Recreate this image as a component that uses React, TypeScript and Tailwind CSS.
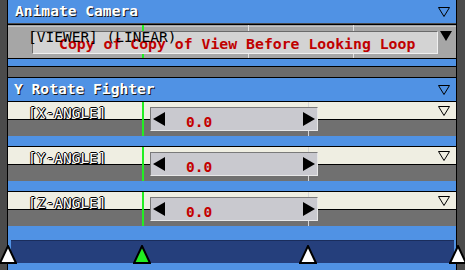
import React from "react";

const FONT = "font-['DejaVu_Sans_Mono',monospace]";

function DownOutline() {
  return (
    <svg width="12" height="10" viewBox="0 0 12 10" className="shrink-0">
      <polygon points="0.5,0.5 11.5,0.5 6,9.5" fill="none" stroke="#000" strokeWidth="1" />
    </svg>
  );
}

function Header({ title, pl }: { title: string; pl: string }) {
  return (
    <div className={`h-[23px] bg-[#5092e4] flex items-center justify-between pr-[6px] ${pl}`}>
      <span className="text-white font-bold text-[14.6px] leading-none [text-shadow:1px_1px_0_#1a1a1a]">{title}</span>
      <DownOutline />
    </div>
  );
}

function LeftArrow() {
  return (
    <svg width="12" height="14" viewBox="0 0 12 14">
      <polygon points="0,7 12,0 12,14" fill="#000" />
    </svg>
  );
}
function RightArrow() {
  return (
    <svg width="12" height="14" viewBox="0 0 12 14">
      <polygon points="12,7 0,0 0,14" fill="#000" />
    </svg>
  );
}

function AngleRow({ label }: { label: string }) {
  return (
    <div className="relative h-[35px] border-t border-black flex flex-col">
      <div className="h-[17px] bg-[#efeee2] flex items-end justify-between pl-[20px] pr-[6px]">
        <span className="text-white text-[14.5px] leading-none mb-[-1px] [text-shadow:1px_1px_0_#000,-1px_0_0_#000,0_-1px_0_#000,1px_0_0_#000]">
          {label}
        </span>
        <div className="self-center">
          <DownOutline />
        </div>
      </div>
      <div className="h-px bg-black" />
      <div className="flex-1 bg-[#707070]" />
      <div className="absolute left-[134px] top-0 bottom-0 w-[2px] bg-[#22ee22]" />
      <div className="absolute left-[300px] top-0 bottom-0 w-px bg-[#d6d6d6]" />
      <div className="absolute left-[142px] top-[5px] w-[168px] h-[24px] bg-[#c9c9cf] border-t border-l border-[#7a7a7a] border-r border-b border-r-[#e8e8e8] border-b-[#e8e8e8] flex items-center justify-between pl-[2px] pr-[2px]">
        <LeftArrow />
        <span className="absolute left-[35px] top-[7px] text-[#c40000] font-bold text-[14.5px] leading-none">0.0</span>
        <RightArrow />
      </div>
    </div>
  );
}

function Marker({ cls, fill }: { cls: string; fill: string }) {
  return (
    <svg width="18" height="19" viewBox="0 0 18 19" className={`absolute top-[245px] ${cls}`}>
      <polygon points="9,1 17,18 1,18" fill={fill} stroke="#000" strokeWidth="2" strokeLinejoin="miter" />
    </svg>
  );
}

export default function App() {
  return (
    <div className={`relative w-[465px] h-[270px] flex overflow-hidden bg-[#4a4a4a] ${FONT}`}>
      <div className="w-[7px] bg-[#4b4b4b]" />
      <div className="w-px bg-black" />
      <div className="w-[448px] flex flex-col">
        {/* Animate Camera header */}
        <div className="h-[25px] border-b border-black flex flex-col">
          <Header title="Animate Camera" pl="pl-[7px]" />
        </div>
        {/* camera row */}
        <div className="relative h-[34px] border-b border-black bg-[#a6a6a6]">
          <div className="absolute left-0 right-0 top-[1px] h-px bg-[#c4c4c4]" />
          <div className="absolute left-[134px] top-0 bottom-0 w-[2px] bg-[#22ee22]" />
          <div className="absolute left-[240px] top-0 bottom-0 w-px bg-[#e2e2e2]" />
          <div className="absolute left-[345px] top-0 bottom-0 w-px bg-[#e2e2e2]" />
          <div className="absolute left-[24px] top-[6px] w-[406px] h-[23px] bg-[#d3d3d3] border-t border-l border-[#6a6a6a] border-r border-b border-r-[#f0f0f0] border-b-[#f0f0f0] flex items-end pl-[26px] pb-[1px]">
            <span className="text-[#c00000] font-bold text-[14.8px] leading-none whitespace-nowrap">
              Copy of Copy of View Before Looking Loop
            </span>
          </div>
          <span className="absolute left-[20px] top-[5px] text-black text-[14.5px] leading-none whitespace-nowrap">
            [VIEWER] (LINEAR)
          </span>
          <svg width="12" height="10" viewBox="0 0 12 10" className="absolute left-[432px] top-[6px]">
            <polygon points="0,0 12,0 6,10" fill="#000" />
          </svg>
        </div>
        <div className="h-[7px] bg-[#5092e4]" />
        <div className="h-[12px] border-y border-black bg-[#6b6b6b]" />
        {/* Y Rotate Fighter */}
        <Header title="Y Rotate Fighter" pl="pl-[6px]" />
        <AngleRow label="[X-ANGLE]" />
        <div className="h-[10px] bg-[#5092e4]" />
        <AngleRow label="[Y-ANGLE]" />
        <div className="h-[10px] bg-[#5092e4]" />
        <AngleRow label="[Z-ANGLE]" />
        <div className="flex-1 bg-[#5092e4] flex flex-col pt-[14px] pl-[3px] pr-[2px] pb-[7px]">
          <div className="flex-1 bg-[#253f7c] border-t border-[#1a2d5c]" />
        </div>
      </div>
      <div className="w-px bg-black" />
      <div className="w-[8px] bg-[#4b4b4b]" />
      <Marker cls="left-[-1px]" fill="#ffffff" />
      <Marker cls="left-[133px]" fill="#22ee22" />
      <Marker cls="left-[299px]" fill="#ffffff" />
      <Marker cls="left-[449px]" fill="#ffffff" />
    </div>
  );
}
